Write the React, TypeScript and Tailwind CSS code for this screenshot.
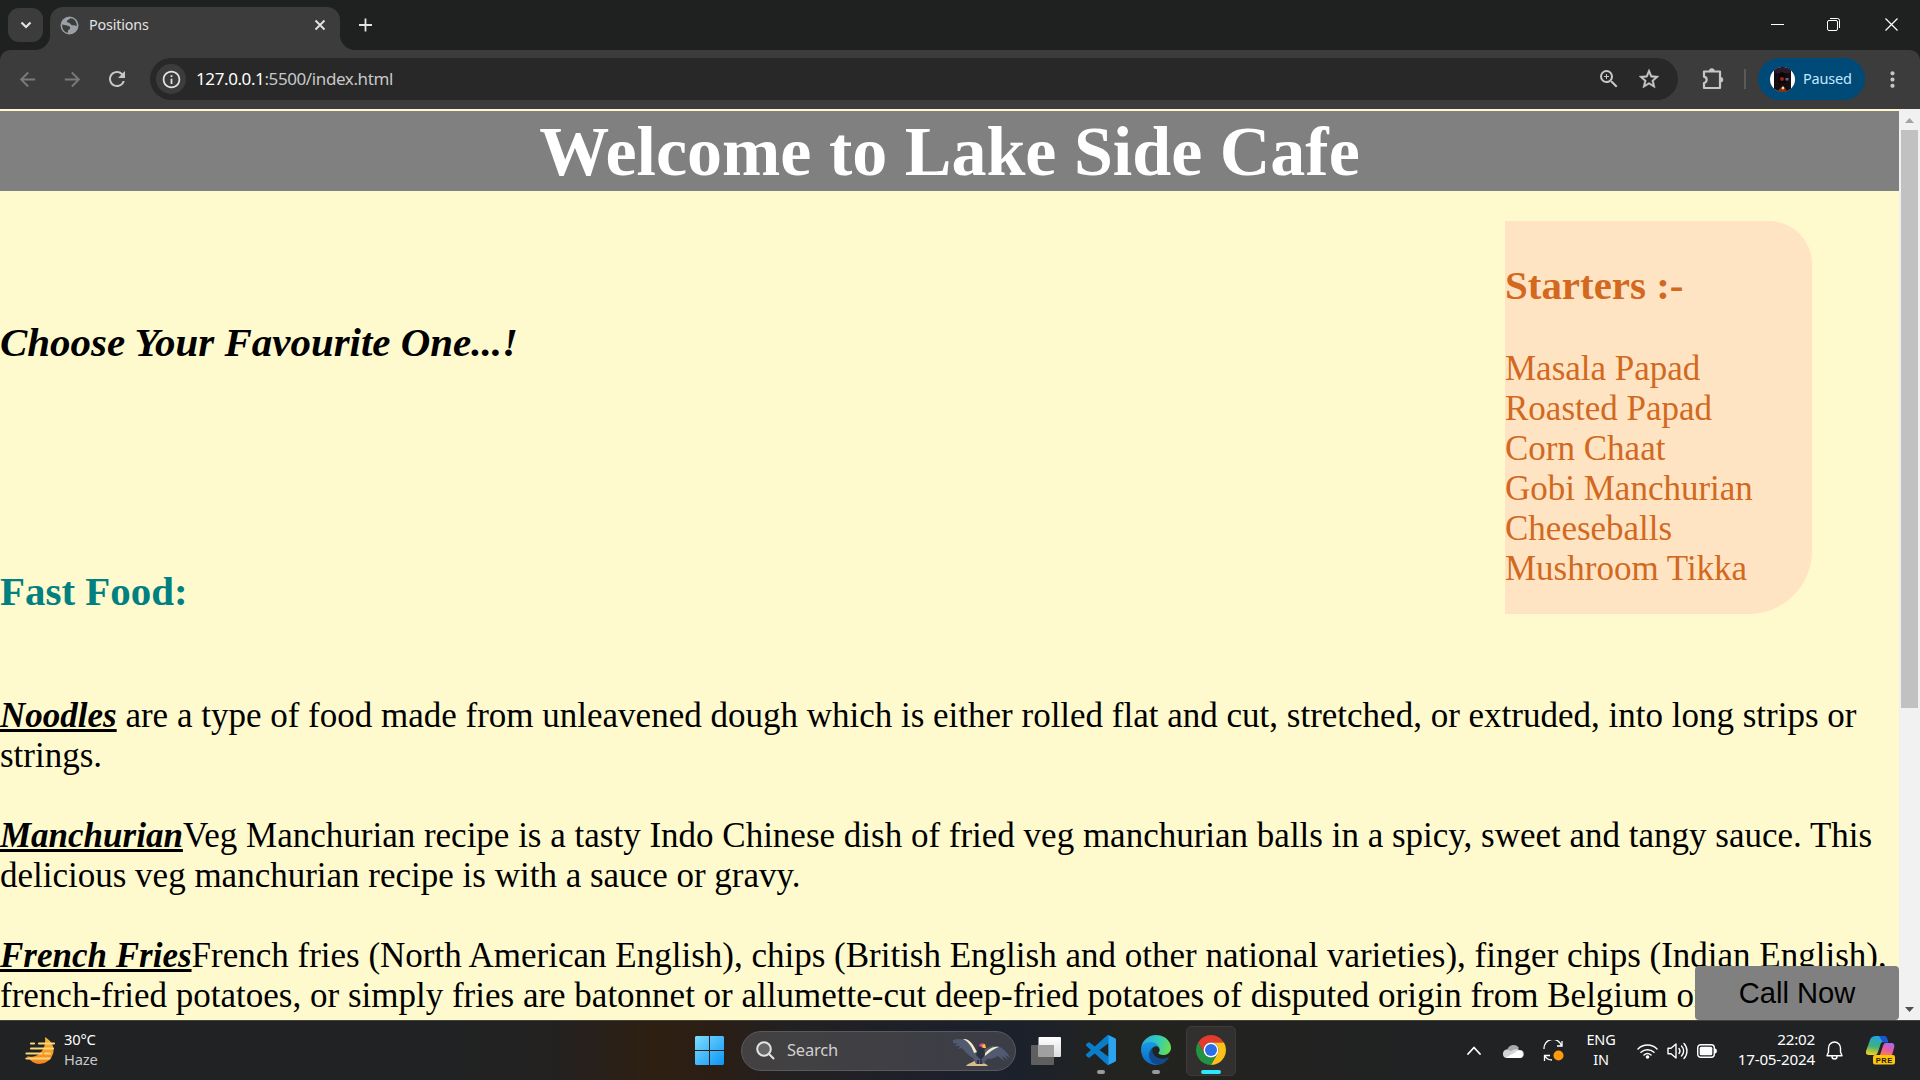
import React from "react";
import { MdArrowBack, MdArrowForward, MdRefresh, MdZoomIn, MdStarOutline, MdMoreVert, MdInfoOutline, MdPublic } from "react-icons/md";

function TabStrip() {
  return (
    <div className="flex h-[50px] shrink-0 items-start bg-[#1f2120] pl-2 text-[#e3e3e3]">
      <div className="mt-2 flex h-[34px] w-[35px] items-center justify-center rounded-[11px] bg-[#3c3c3c]">
        <svg width="12" height="8" viewBox="0 0 12 8" fill="none" stroke="currentColor" strokeWidth="2.2"><path d="M1.5 1.5 6 6l4.500-4.500" /></svg>
      </div>
      <svg className="mt-[34px] -ml-2 shrink-0" width="15" height="16" viewBox="0 0 15 16"><path d="M15 0v16H0A15 15 0 0 0 15 2z" fill="#3c3c3c" /></svg>
      <div className="mt-[7px] flex h-[43px] w-[290px] items-center rounded-t-[13px] bg-[#3c3c3c] pr-[14px] pb-[7px] pl-[10px]">
        <svg className="mr-[10px]" width="19" height="19" viewBox="0 0 19 19">
          <circle cx="9.500" cy="9.500" r="9" fill="#9aa0a6" />
          <path d="M2.200 8.500 7 9.500l3 1.200v2.300l-2 1.200v2.600C4.500 16.500 1.800 13 2.200 8.500zM10 2.200c-.5 1.600-3 1.400-3.200 3.200 0 1.400 2.400.8 3 1.800.8 1.400 2.400 2.300 4 2 1.400-.3 2 .8 3 .8C17 5.500 14 2 10 2.200z" fill="#3c3c3c" />
        </svg>
        <span className="text-[14.300px] tracking-[-0.15px]">Positions</span>
        <svg className="ml-auto" width="12" height="12" viewBox="0 0 12 12" stroke="currentColor" strokeWidth="1.900"><path d="m1.500 1.500 9 9m0-9-9 9" /></svg>
      </div>
      <svg className="mt-[34px] shrink-0" width="15" height="16" viewBox="0 0 15 16"><path d="M0 0v16h15A15 15 0 0 1 0 2z" fill="#3c3c3c" /></svg>
      <svg className="mt-[18px] ml-[4px]" width="13" height="14" viewBox="0 0 13 14" stroke="currentColor" strokeWidth="1.800"><path d="M6.500 0.500v13M0 7h13" /></svg>
      <div className="mt-[18px] mr-[22px] ml-auto flex items-center text-white">
        <svg width="13" height="13" viewBox="0 0 13 13" stroke="currentColor"><path d="M0 6.500h13" /></svg>
        <svg className="ml-[43px]" width="13" height="13" viewBox="0 0 13 13" fill="none" stroke="currentColor"><rect x=".5" y="2.500" width="10" height="10" rx="1.500" /><path d="M3 .5h7.500a2 2 0 0 1 2 2V10" /></svg>
        <svg className="ml-[45px]" width="13" height="13" viewBox="0 0 13 13" stroke="currentColor" strokeWidth="1.200"><path d="m.5.5 12 12m0-12-12 12" /></svg>
      </div>
    </div>
  );
}

function Avatar() {
  return (
    <svg width="25" height="25" viewBox="0 0 25 25">
      <defs><clipPath id="avatar"><circle cx="12.500" cy="12.500" r="12.500" /></clipPath></defs>
      <g clipPath="url(#avatar)">
        <rect width="25" height="25" fill="#fff" />
        <rect x="4" width="17" height="25" fill="#160c10" />
        <path d="M5 1h15v5H5z" fill="#2b1a2d" />
        <path d="M9 8c1-4 5-4 6 0l1 8H8z" fill="#090606" />
        <circle cx="12" cy="12" r="2" fill="#a62213" />
        <path d="M15.500 11h3v2.500h-3z" fill="#6d6285" />
        <path d="M8 25c1-6 8-6 9 0z" fill="#8b3313" />
        <circle cx="13" cy="21" r="1.400" fill="#ffd9a0" />
      </g>
    </svg>
  );
}

function Toolbar() {
  return (
    <div className="shrink-0 bg-[#1f2120]">
      <div className="flex h-[59px] items-center rounded-t-[10px] bg-[#3c3c3c] pb-[1px] text-[#c7c7c7]">
        <MdArrowBack className="ml-[16px] size-[23px] text-[#7a7a7a]" />
        <MdArrowForward className="ml-[22px] size-[23px] text-[#7a7a7a]" />
        <MdRefresh className="ml-[21px] size-[24px]" />
        <div className="ml-[21px] flex h-[42px] w-[1528px] items-center rounded-full bg-[#282828]">
          <div className="ml-[6px] flex size-[30px] items-center justify-center rounded-full bg-[#3c3c3c]">
            <MdInfoOutline className="size-[21px] text-[#e3e3e3]" />
          </div>
          <span className="ml-[10px] text-[17px] tracking-[-0.4px] text-[#c7c7c7]"><span className="text-white">127.0.0.1</span>:5500/index.html</span>
          <MdZoomIn className="ml-auto size-[24px]" />
          <MdStarOutline className="mr-[17px] ml-[16px] size-[24px]" stroke="currentColor" strokeWidth="0.4" />
        </div>
        <svg className="ml-[24px]" width="22" height="22" viewBox="0 0 22 22" fill="none" stroke="currentColor" strokeWidth="2.200" strokeLinejoin="round">
          <path d="M2 3.500h16v16.500H2v-5a3.200 3.200 0 0 0 0-6.300z" />
          <path d="M7 3a2.800 2.800 0 0 1 5.600 0zM18.500 9a2.700 2.700 0 0 1 0 5.400z" fill="currentColor" stroke="none" />
        </svg>
        <div className="ml-[20px] h-[20px] w-[2px] bg-[#5a5a5a]" />
        <div className="ml-[12px] flex h-[42px] w-[107px] items-center rounded-full bg-[#004a77] pl-[12px] text-[#c2e7ff]">
          <Avatar />
          <span className="ml-[8px] text-[14.500px] tracking-[-0.2px]">Paused</span>
        </div>
        <MdMoreVert className="ml-[15px] size-[25px]" />
      </div>
    </div>
  );
}

const starters = ["Masala Papad", "Roasted Papad", "Corn Chaat", "Gobi Manchurian", "Cheeseballs", "Mushroom Tikka"];

const dishes = [
  { name: "Noodles", lines: [" are a type of food made from unleavened dough which is either rolled flat and cut, stretched, or extruded, into long strips or", "strings."] },
  { name: "Manchurian", lines: ["Veg Manchurian recipe is a tasty Indo Chinese dish of fried veg manchurian balls in a spicy, sweet and tangy sauce. This", "delicious veg manchurian recipe is with a sauce or gravy."] },
  { name: "French Fries", lines: ["French fries (North American English), chips (British English and other national varieties), finger chips (Indian English),", "french-fried potatoes, or simply fries are batonnet or allumette-cut deep-fried potatoes of disputed origin from Belgium or"] },
];

function CafePage() {
  return (
    <div className="relative h-[911px] w-[1899px] overflow-hidden bg-[#fffacd] pt-[2px] font-['Liberation_Serif',serif] text-[35px] leading-[40px] text-black">
      <h1 className="h-[80px] bg-[#808080] text-center text-[70px] leading-[82px] font-bold text-white">Welcome to Lake Side Cafe</h1>
      <div className="flex h-[505px] justify-between">
        <div>
          <h3 className="mt-[128px] text-[40.950px] leading-[47px] font-bold italic">Choose Your Favourite One...!</h3>
          <h3 className="mt-[202px] text-[40.950px] leading-[47px] font-bold text-[#008080]">Fast Food:</h3>
        </div>
        <div className="mt-[30px] mr-[87px] h-[393px] w-[307px] rounded-tr-[43px] rounded-br-[63px] bg-[#ffe4c4] pt-[41px] text-[#d2691e]">
          <h3 className="mb-[40px] text-[40.950px] leading-[47px] font-bold">Starters :-</h3>
          {starters.map((s) => <div key={s}>{s}</div>)}
        </div>
      </div>
      {dishes.map((d) => (
        <p key={d.name} className="mb-[40px] whitespace-nowrap">
          <b className="italic underline decoration-[3px]">{d.name}</b>{d.lines[0]}<br />{d.lines[1]}
        </p>
      ))}
      <button className="absolute right-0 bottom-0 h-[54px] w-[204px] rounded-[4px] bg-[#808080] font-['Liberation_Sans',sans-serif] text-[29.170px] leading-[54px]">Call Now</button>
    </div>
  );
}

function Scrollbar() {
  return (
    <div className="flex h-[911px] w-[21px] flex-col items-center bg-[#f1f1f1]">
      <svg className="mt-[9px]" width="9" height="5" viewBox="0 0 9 5"><path d="M4.500 0 9 5H0z" fill="#a3a3a3" /></svg>
      <div className="mt-[7px] h-[578px] w-[17px] bg-[#c1c1c1]" />
      <svg className="mt-auto mb-[8px]" width="9" height="5" viewBox="0 0 9 5"><path d="M4.500 5 9 0H0z" fill="#505050" /></svg>
    </div>
  );
}

function HazeIcon() {
  return (
    <svg width="31" height="30" viewBox="0 0 31 30">
      <defs><linearGradient id="haze" x1="0" y1="0" x2="0" y2="1"><stop offset="0" stopColor="#f5b53a" /><stop offset="1" stopColor="#f58420" /></linearGradient></defs>
      <path d="M20 1c7 4 10 11 8 17a14 14 0 0 1-26 2c6 3 20-2 18-19z" fill="url(#haze)" />
      <g stroke="#fbd774" strokeWidth="2.200" strokeLinecap="round"><path d="M6 7.500h3M14 7.500h15M6 12.500h22M1.500 17.500h15M20 17.500h5M1.500 22.500h23" /></g>
    </svg>
  );
}

function CondorIcon() {
  return (
    <svg width="60" height="30" viewBox="0 0 60 30">
      <path d="M15 28c2-3 6-3 8-5h6c2 2 6 2 8 5z" fill="#d9bc8e" />
      <path d="M2 2c5-2 11-1 15 1 5 3 7 8 9 12l4-2c4-1 9-6 15-5 7 1 12 7 14 12l-5-3 3 5-6-4 2 5-6-5c-3 2-7 3-11 3l-4 5h-7l-3-6c-4-2-8-6-11-10l-4 1 2-3-6 0 4-2-5-1z" fill="#515a70" />
      <path d="M12 1c7-1 11 7 14 13l-3 1C21 9 18 4 12 1zM33 17c4-6 9-9 15-8-6 2-9 5-14 9z" fill="#f3ecc9" />
      <path d="M27 11c0-3 4-5 6-2l1 8-4 5-5-5z" fill="#2b303e" />
      <path d="M28 8c0-3 5-4 6-1l-2 3z" fill="#e6418a" /><path d="m31 7 3-1 1 4-3 0z" fill="#ffc52b" />
      <path d="M27 22v4M30 22v4" stroke="#252a35" strokeWidth="1.500" />
    </svg>
  );
}

function VsCodeIcon() {
  return (
    <svg width="30" height="30" viewBox="0 0 24 24">
      <path d="M23.150 2.587L18.210.210a1.494 1.494 0 0 0-1.705.290l-9.460 8.630-4.120-3.128a.999.999 0 0 0-1.276.057L.327 7.261A1 1 0 0 0 .326 8.740L3.899 12 .326 15.260a1 1 0 0 0 .001 1.479L1.650 17.940a.999.999 0 0 0 1.276.057l4.120-3.128 9.460 8.630a1.492 1.492 0 0 0 1.704.290l4.942-2.377A1.500 1.500 0 0 0 24 20.060V3.939a1.500 1.500 0 0 0-.850-1.352zm-5.146 14.861L10.826 12l7.178-5.448v10.896z" fill="#0a7cc9" />
      <path d="M18 .2 23.150 2.587A1.500 1.500 0 0 1 24 3.940v16.120a1.500 1.500 0 0 1-.850 1.352L18 23.800z" fill="#2ba3ee" />
    </svg>
  );
}

function EdgeIcon() {
  return (
    <svg width="30" height="30" viewBox="0 0 256 256">
      <defs>
        <linearGradient id="edgeTop" x1="0" y1="0.300" x2="1" y2="0.500"><stop offset="0" stopColor="#28a9e0" /><stop offset=".5" stopColor="#30c9c4" /><stop offset="1" stopColor="#66e050" /></linearGradient>
        <linearGradient id="edgeMid" x1="0" y1="0" x2="0" y2="1"><stop offset="0" stopColor="#1b9de2" /><stop offset="1" stopColor="#0a68c4" /></linearGradient>
      </defs>
      <path d="M231 190.500c-3.400 1.800-6.900 3.400-10.500 4.700a101.500 101.500 0 0 1-35.800 6.400c-47.200 0-88.300-32.500-88.300-74.100a31.500 31.500 0 0 1 16.400-27.300c-42.700 1.800-53.700 46.300-53.700 72.400 0 74 68.100 81.400 82.800 81.400 7.900 0 19.800-2.300 27-4.600l1.300-.4a128.800 128.800 0 0 0 66.600-52.800 4 4 0 0 0-5.800-5.700z" fill="#114a8b" />
      <path d="M105.700 241.500A79.200 79.200 0 0 1 83 220.100 80.700 80.700 0 0 1 112.700 100.300c3.100-1.500 8.500-4.100 15.600-4a32.400 32.400 0 0 1 25.700 13 31.900 31.900 0 0 1 6.300 18.700c0-.2 24.500-79.600-80-79.600-43.900 0-80 41.600-80 78.200a130.200 130.200 0 0 0 12.100 56 128 128 0 0 0 156.400 67.100 75.500 75.500 0 0 1-62.800-8.200z" fill="url(#edgeMid)" />
      <path d="M152.300 148.900c-.8 1-3.300 2.500-3.300 5.700 0 2.600 1.700 5.100 4.700 7.200 14.400 10 41.500 8.700 41.600 8.700a59.600 59.600 0 0 0 30.300-8.300 61.400 61.400 0 0 0 30.400-52.900c.3-22.400-8-37.300-11.300-43.900C223.500 23.900 177.700 0 128 0A128 128 0 0 0 0 126.200c.5-36.500 36.800-66 80-66 3.500 0 23.500.3 42 10.100 16.300 8.600 24.900 18.900 30.800 29.200 6.200 10.700 7.300 24.100 7.300 29.500s-2.700 13.300-7.800 19.900z" fill="url(#edgeTop)" />
    </svg>
  );
}

function ChromeIcon() {
  return (
    <svg width="30" height="30" viewBox="0 0 48 48">
      <path d="M24 12h20.780A24 24 0 0 0 3.220 12L13.600 30A12 12 0 0 1 24 12z" fill="#e33b2e" />
      <path d="M13.600 30 3.220 12A24 24 0 0 0 24 48l10.400-18a12 12 0 0 1-20.800 0z" fill="#229342" />
      <path d="M34.400 30 24 48a24 24 0 0 0 20.780-36H24a12 12 0 0 1 10.400 18z" fill="#fbc116" />
      <circle cx="24" cy="24" r="12" fill="#fff" /><circle cx="24" cy="24" r="9.600" fill="#2a6fe8" />
    </svg>
  );
}

function TaskbarApp({ children }: { children: React.ReactNode }) {
  return (
    <div className="flex h-[50px] w-[30px] flex-col items-center pt-[9px]">
      {children}
      <div className="mt-[5px] h-1 w-2 rounded-full bg-[#9a9a9a]" />
    </div>
  );
}

function Tray() {
  return (
    <div className="ml-auto flex items-center text-white">
      <svg width="14" height="9" viewBox="0 0 14 9" fill="none" stroke="currentColor" strokeWidth="1.800" strokeLinecap="round" strokeLinejoin="round"><path d="m1 8 6-6.500L13 8" /></svg>
      <svg className="ml-[22px]" width="21" height="14" viewBox="0 0 21 14"><path d="M5 14a4.500 4.500 0 0 1-.5-9A6.500 6.500 0 0 1 16 4z" fill="#a9a9a9" /><path d="M4 14a4 4 0 0 1 0-8c1.500 0 3 .5 4 1.500C10 5 14 4 16.500 6A4 4 0 0 1 17 14z" fill="#d5d5d5" /><path d="m3 13.500 9-5a5 5 0 0 1 5-2A3.900 3.900 0 0 1 17 14H4z" fill="#fff" /></svg>
      <svg className="ml-[19px]" width="21" height="21" viewBox="0 0 21 21" fill="none" stroke="currentColor" strokeWidth="1.300"><path d="M1 9A9 9 0 0 1 18.500 5.500M19 1v5h-5M7 15.500H1.500V21M2 16c1 2 4 4 7 4" /><circle cx="15.500" cy="15.500" r="5" fill="#ff9a0c" stroke="none" /></svg>
      <div className="ml-[22px] w-[30px] -translate-y-[2px] text-center text-[14.500px] leading-[20px] tracking-[-0.2px]">ENG<br />IN</div>
      <svg className="ml-[21px]" width="21" height="16" viewBox="0 0 21 16" fill="none" stroke="currentColor" strokeWidth="1.500" strokeLinecap="round"><path d="M1 6a13.500 13.500 0 0 1 19 0M4 9.200a9.500 9.500 0 0 1 13 0M7 12a5.500 5.500 0 0 1 7 0" /><circle cx="10.500" cy="14" r="1.800" fill="currentColor" stroke="none" /></svg>
      <svg className="ml-[9px]" width="21" height="18" viewBox="0 0 21 18" fill="none" stroke="currentColor" strokeWidth="1.400" strokeLinecap="round" strokeLinejoin="round"><path d="M1 6.200h3L9 2v14l-5-4.200H1zM12 6.500a4 4 0 0 1 0 5M14.500 4a7 7 0 0 1 0 10M17 1.500a11 11 0 0 1 0 15" /></svg>
      <svg className="ml-[9px]" width="20" height="14" viewBox="0 0 20 14"><rect x=".7" y=".7" width="16.600" height="12.600" rx="3" fill="none" stroke="currentColor" strokeWidth="1.400" /><rect x="2.700" y="2.700" width="12.600" height="8.600" rx="1.500" fill="currentColor" /><path d="M18 4.500c2.500 0 2.500 5 0 5z" fill="currentColor" /></svg>
      <div className="ml-[15px] w-[83px] -translate-y-[2px] text-right text-[15.200px] leading-[20px] tracking-[-0.2px] whitespace-nowrap">22:02<br />17-05-2024</div>
      <svg className="ml-[11px]" width="17" height="19" viewBox="0 0 17 19" fill="none" stroke="currentColor" strokeWidth="1.400" strokeLinejoin="round"><path d="M8.500 1a6 6 0 0 0-6 6v4L1 14.800h15L14.500 11V7a6 6 0 0 0-6-6zM6 15.500a2.500 2.500 0 0 0 5 0" /></svg>
      <svg className="mr-[25px] ml-[23px]" width="29" height="29" viewBox="0 0 29 29">
        <defs>
          <linearGradient id="cpA" x1=".5" y1="0" x2=".3" y2="1"><stop offset="0" stopColor="#1fa4e8" /><stop offset=".55" stopColor="#3fb07c" /><stop offset="1" stopColor="#f3d21a" /></linearGradient>
          <linearGradient id="cpB" x1=".7" y1="0" x2=".3" y2="1"><stop offset="0" stopColor="#a36bf0" /><stop offset=".5" stopColor="#e55ba6" /><stop offset="1" stopColor="#f77c5c" /></linearGradient>
        </defs>
        <path d="M10 0h8c2 0 3 2 4 6h-5c-2 0-2.500 2-3 4l-2 6c-1 3-2 3-4 3H3c-3 0-3.500-2-3-4L4 4c1-3 3-4 6-4z" fill="url(#cpA)" />
        <path d="M13 0h5c2 0 3 2 4 6.500h-5z" fill="#1b55d8" />
        <path d="M20 7h5c3 0 4 2 3 5l-2 7H14l3-9c.5-2 1.500-3 3-3z" fill="url(#cpB)" />
        <rect x="7" y="19" width="22" height="9.500" rx="2" fill="#fdc50c" />
        <text x="18.200" y="26.500" textAnchor="middle" fontSize="7.500" fontWeight="700" fontFamily="Liberation Sans" letterSpacing=".5" fill="#1b1b1b">PRE</text>
      </svg>
    </div>
  );
}

function Taskbar() {
  return (
    <div className="flex h-[60px] shrink-0 items-center border-t border-[#41433f] bg-[linear-gradient(90deg,#202224_0%,#202224_22%,#232120_29%,#2e1f12_34%,#2b1e14_37%,#222021_41%,#1e202a_48%,#1b212c_53%,#23231f_58%,#222220_66%,#202224_76%,#202224_100%)]">
      <div className="flex w-[695px] items-center pl-[25px]">
        <HazeIcon />
        <div className="ml-[8px] -translate-y-[2px] text-[14.700px] leading-[20px] tracking-[-0.2px] text-[#c9c9c9]"><span className="text-white">30°C</span><br />Haze</div>
      </div>
      <svg width="29" height="29" viewBox="0 0 29 29">
        <defs><linearGradient id="win" x1="0" y1="0" x2="1" y2="1"><stop offset="0" stopColor="#7fdcff" /><stop offset="1" stopColor="#0a96f5" /></linearGradient></defs>
        <path d="M1 0h13v14H0V1zM15 0h13l1 1v13H15zM0 15h14v14H1l-1-1zM15 15h14v13l-1 1H15z" fill="url(#win)" />
      </svg>
      <div className="ml-[17px] flex h-[40px] w-[275px] items-center rounded-full border border-[#5a595c] bg-[linear-gradient(90deg,#434141,#3b3d47)] pl-[14px]">
        <svg width="19" height="19" viewBox="0 0 19 19" fill="#666" stroke="#e4e4e4" strokeWidth="2" strokeLinecap="round"><circle cx="8" cy="8" r="6.800" /><path d="m13 13 4.500 4.500" /></svg>
        <span className="ml-[12px] text-[16.500px] tracking-[-0.2px] text-[#d0d0d0]">Search</span>
        <div className="mr-[4px] ml-auto pt-1"><CondorIcon /></div>
      </div>
      <svg className="mr-[25px] ml-[15px]" width="30" height="28" viewBox="0 0 30 28">
        <defs><linearGradient id="tv" x1="0" y1="0" x2="0" y2="1"><stop offset="0" stopColor="#fff" /><stop offset="1" stopColor="#dcdcdc" /></linearGradient></defs>
        <rect y="8" width="23" height="20" rx="1" fill="#5f5f5f" /><rect x="7.500" width="22.500" height="20" rx="1" fill="url(#tv)" /><path d="M7.500 8H23v12H7.500z" fill="#a0a0a0" />
      </svg>
      <TaskbarApp><VsCodeIcon /></TaskbarApp>
      <div className="ml-[25px]"><TaskbarApp><EdgeIcon /></TaskbarApp></div>
      <div className="ml-[15px] flex h-[50px] w-[50px] flex-col items-center rounded-[5px] border border-[#3c3b39] bg-[#31302e] pt-[8px]">
        <ChromeIcon />
        <div className="mt-[5px] h-1 w-5 shrink-0 rounded-full bg-[#2fe7fb]" />
      </div>
      <Tray />
    </div>
  );
}

export default function App() {
  return (
    <div className="flex h-[1080px] w-[1920px] flex-col overflow-hidden bg-[#1f2120] font-['Noto_Sans','Open_Sans',sans-serif]">
      <TabStrip />
      <Toolbar />
      <div className="flex h-[911px] shrink-0">
        <CafePage />
        <Scrollbar />
      </div>
      <Taskbar />
    </div>
  );
}
